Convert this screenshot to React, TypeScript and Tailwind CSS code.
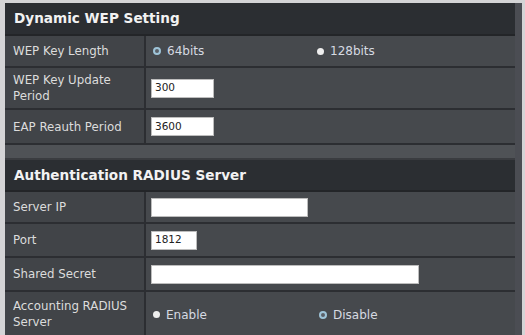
import React from 'react';

const font = { fontFamily: '"DejaVu Sans", Verdana, sans-serif' };

const Radio: React.FC<{ filled?: boolean; label: string }> = ({ filled, label }) => (
  <span className="flex items-center gap-[6px] text-[12px] text-[#d6dae2]">
    {filled ? (
      <span className="w-[7px] h-[7px] rounded-full bg-[#eeeeee]" />
    ) : (
      <span className="w-[8px] h-[8px] rounded-full border-2 border-[#9ec4d8] bg-[#5a6068]" />
    )}
    {label}
  </span>
);

const Row: React.FC<{ label: React.ReactNode; h: string; children?: React.ReactNode }> = ({ label, h, children }) => (
  <div className={`flex border-b-2 border-[#2c2e32] ${h}`}>
    <div className="w-[141px] shrink-0 flex items-center pl-[8px] text-[11.8px] leading-[16px] text-[#dcdcdc] border-r-2 border-[#2c2e32] bg-[#414448]">
      {label}
    </div>
    <div className="flex-1 flex items-center pl-[5px] bg-[#46494d]">{children}</div>
  </div>
);

const Input: React.FC<{ w: string; value?: string }> = ({ w, value }) => (
  <div className={`${w} h-[19px] bg-white border border-[#bdbdbd] flex items-center pl-[3px] text-[10.5px] text-[#222]`}>{value}</div>
);

const Header: React.FC<{ title: string; h: string }> = ({ title, h }) => (
  <div className={`${h} flex items-center pl-[9px] bg-[#2b2e32] border-b-2 border-[#232528] text-[13.6px] font-bold text-[#f2f2f2]`}>
    {title}
  </div>
);

export default function App() {
  return (
    <div className="w-[525px] h-[335px] overflow-hidden bg-[#d4d4d6] pl-[5px] pt-[3px] pr-[3px]" style={font}>
      <div className="h-full border-r-[7px] border-[#4b4d53] bg-[#46494d]">
        <Header title="Dynamic WEP Setting" h="h-[33px]" />
        <Row label="WEP Key Length" h="h-[32px]">
          <div className="w-[166px] pl-[2px]"><Radio label="64bits" /></div>
          <Radio filled label="128bits" />
        </Row>
        <Row label={<span>WEP Key Update<br />Period</span>} h="h-[42px]">
          <Input w="w-[63px]" value="300" />
        </Row>
        <Row label="EAP Reauth Period" h="h-[35px]">
          <Input w="w-[63px]" value="3600" />
        </Row>
        <div className="h-[15px] bg-[#4f5256] border-b-2 border-[#3a3c40]" />
        <Header title="Authentication RADIUS Server" h="h-[32px]" />
        <Row label="Server IP" h="h-[32px]">
          <Input w="w-[157px]" />
        </Row>
        <Row label="Port" h="h-[34px]">
          <Input w="w-[46px]" value="1812" />
        </Row>
        <Row label="Shared Secret" h="h-[34px]">
          <Input w="w-[268px]" />
        </Row>
        <Row label={<span>Accounting RADIUS<br />Server</span>} h="h-[45px]">
          <div className="w-[168px] pl-[2px] pt-[2px]"><Radio filled label="Enable" /></div>
          <div className="pt-[2px]"><Radio label="Disable" /></div>
        </Row>
      </div>
    </div>
  );
}
